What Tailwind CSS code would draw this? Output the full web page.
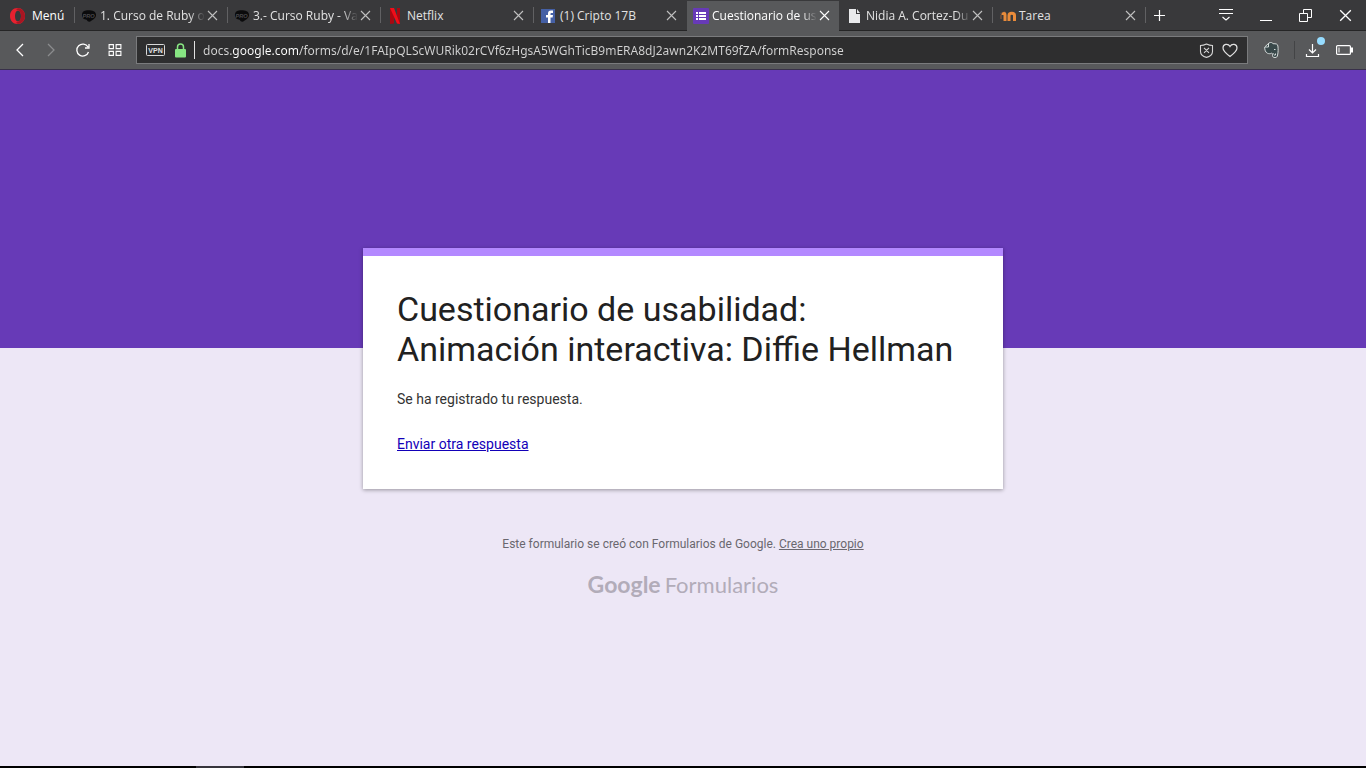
<!DOCTYPE html>
<html lang="es">
<head>
<meta charset="utf-8">
<title>Cuestionario de usabilidad</title>
<script src="https://cdn.jsdelivr.net/npm/@tailwindcss/browser@4"></script>
</head>
<body class="flex min-h-screen flex-col bg-[#ede7f6] font-['Roboto',sans-serif]">
<svg class="hidden" aria-hidden="true">
  <symbol id="x" viewBox="0 0 11 11"><path d="M1 1l9 9M10 1l-9 9" fill="none" stroke="currentColor" stroke-width="1.1"/></symbol>
  <symbol id="pro" viewBox="0 0 17 16"><path d="M1 7C1 3 4 2 8 2s8 1 8 5c0 3-3 5-5 6-2 2-4 1-5-1-3 0-5-2-5-5z" fill="#0b0b0c"/><text x="8" y="10" font-size="6" font-weight="bold" font-style="italic" text-anchor="middle" fill="#4a4a4c" font-family="Liberation Sans, sans-serif">PRO</text></symbol>
</svg>

<header class="font-['Open_Sans',sans-serif] text-xs text-[#e2e2e2]">
  <div class="flex h-[31px] items-center border-b border-[#252526] bg-[#39393b]">
    <button class="flex h-full w-[74px] shrink-0 items-center gap-[7px] pt-[2px] pl-[10px] text-white">
      <svg class="h-4 w-[15px]" viewBox="0 0 15 16"><path fill="#e8212f" fill-rule="evenodd" d="M7.500 0C3 0 0 3.500 0 8s3 8 7.500 8S15 12.500 15 8 12 0 7.500 0zm.5 2.500c2 0 3 2.500 3 5.500s-1 5.500-3 5.500S5 11 5 8s1-5.500 3-5.500z"/><path fill="#a81622" d="M9 .3c3.600.7 6 3.900 6 7.700s-2.400 7-6 7.700c-1.200.2-2.200-.4-3-1.500 1 .2 2 .1 2.800-.6C10.300 12.500 11 10.500 11 8s-.7-4.500-2.200-5.600C8 1.700 7 1.600 6 1.800 6.800.7 7.800.1 9 .3z"/></svg>
      <span>Menú</span>
    </button>
    <div class="flex h-full min-w-0 flex-1 items-center" role="tablist">
      <div class="flex h-full w-[153px] items-center">
        <span class="h-4 w-px shrink-0 bg-[#616163]"></span>
        <button role="tab" class="flex min-w-0 flex-1 items-center gap-[3px] pt-px pl-[6px] text-left"><svg class="h-4 w-4 shrink-0"><use href="#pro"/></svg><span class="w-[105px] overflow-hidden whitespace-nowrap mask-r-from-85% mask-r-to-100%">1. Curso de Ruby o</span></button>
        <button aria-label="Cerrar" class="mr-[9px] text-[#c0c0c0]"><svg class="size-[11px]"><use href="#x"/></svg></button>
      </div>
      <div class="flex h-full w-[153px] items-center">
        <span class="h-4 w-px shrink-0 bg-[#616163]"></span>
        <button role="tab" class="flex min-w-0 flex-1 items-center gap-[3px] pt-px pl-[6px] text-left"><svg class="h-4 w-4 shrink-0"><use href="#pro"/></svg><span class="w-[105px] overflow-hidden whitespace-nowrap mask-r-from-85% mask-r-to-100%">3.- Curso Ruby - Va</span></button>
        <button aria-label="Cerrar" class="mr-[9px] text-[#c0c0c0]"><svg class="size-[11px]"><use href="#x"/></svg></button>
      </div>
      <div class="flex h-full w-[153px] items-center">
        <span class="h-4 w-px shrink-0 bg-[#616163]"></span>
        <button role="tab" class="flex min-w-0 flex-1 items-center gap-1 pt-px pl-[6px] text-left"><svg class="h-4 w-4 shrink-0" viewBox="0 0 16 16"><path d="M3 0h4v15.500L3 16zM10 0h3v16l-3-.5z" fill="#a80811"/><path d="M3 0h4l6 16-3-.5z" fill="#f20d19"/></svg><span class="whitespace-nowrap">Netflix</span></button>
        <button aria-label="Cerrar" class="mr-[9px] text-[#c0c0c0]"><svg class="size-[11px]"><use href="#x"/></svg></button>
      </div>
      <div class="flex h-full w-[153px] items-center">
        <span class="h-4 w-px shrink-0 bg-[#616163]"></span>
        <button role="tab" class="flex min-w-0 flex-1 items-center gap-1 pt-px pl-[6px] text-left"><svg class="h-4 w-4 shrink-0" viewBox="0 0 16 16"><path d="M1 1h14v14H1z" fill="#4560a5"/><path d="M8 15V9.500H6V7h2V5.500C8 3.500 9 2.500 11 2.500h2V5h-1.500c-.8 0-1 .3-1 1v1H13l-.4 2.500h-2.100V15z" fill="#fff"/></svg><span class="whitespace-nowrap">(1) Cripto 17B</span></button>
        <button aria-label="Cerrar" class="mr-[9px] text-[#c0c0c0]"><svg class="size-[11px]"><use href="#x"/></svg></button>
      </div>
      <div class="flex h-full w-[153px] items-center pt-px pl-px">
       <div class="flex h-[30px] w-full items-center bg-[#58595b] text-white">
        <button role="tab" aria-selected="true" class="flex min-w-0 flex-1 items-center gap-[3px] pl-[6px] text-left"><svg class="h-4 w-4 shrink-0" viewBox="0 0 16 16"><rect width="16" height="16" rx="1" fill="#673ab7"/><path d="M3 4h2v2H3zM6 4h7v2H6zM3 7h2v2H3zM6 7h7v2H6zM3 10h2v2H3zM6 10h7v2H6z" fill="#fff"/></svg><span class="w-[105px] overflow-hidden whitespace-nowrap mask-r-from-85% mask-r-to-100%">Cuestionario de us</span></button>
        <button aria-label="Cerrar" class="mr-[9px]"><svg class="size-[11px]"><use href="#x"/></svg></button>
       </div>
      </div>
      <div class="flex h-full w-[153px] items-center">
        <button role="tab" class="flex min-w-0 flex-1 items-center gap-[3px] pt-px pl-2 text-left"><svg class="h-4 w-4 shrink-0" viewBox="0 0 16 16"><path d="M2 1h7v5h4v9H2z M10 1l3 4h-3z" fill="#e9eaec"/></svg><span class="w-[105px] overflow-hidden whitespace-nowrap mask-r-from-85% mask-r-to-100%">Nidia A. Cortez-Du</span></button>
        <button aria-label="Cerrar" class="mr-[9px] text-[#c0c0c0]"><svg class="size-[11px]"><use href="#x"/></svg></button>
      </div>
      <div class="flex h-full w-[153px] items-center">
        <span class="h-4 w-px shrink-0 bg-[#616163]"></span>
        <button role="tab" class="flex min-w-0 flex-1 items-center gap-[3px] pt-px pl-[7px] text-left"><svg class="h-4 w-4 shrink-0" viewBox="0 0 16 16"><path d="M0 5l5-2 1 2-5 2z" fill="#5b4a42"/><path d="M1 7v4" stroke="#76513a" stroke-width="1.500"/><path d="M5 13V7c0-2-2-2-2 0M9 13V7.500c0-3 5.500-3 5.500 0V13" fill="none" stroke="#e98b3a" stroke-width="3"/></svg><span class="whitespace-nowrap">Tarea</span></button>
        <button aria-label="Cerrar" class="mr-[9px] text-[#c0c0c0]"><svg class="size-[11px]"><use href="#x"/></svg></button>
      </div>
      <span class="h-4 w-px shrink-0 bg-[#616163]"></span>
      <button aria-label="Pestaña nueva" class="ml-2 text-white"><svg class="size-[11px]" viewBox="0 0 11 11"><path d="M5.500 0v11M0 5.500h11" stroke="currentColor" stroke-width="1.200"/></svg></button>
    </div>
    <div class="flex shrink-0 items-center gap-[27px] pr-[14px] text-white">
      <button aria-label="Menú de pestañas"><svg class="h-[14px] w-[14px]" viewBox="0 0 14 14"><path d="M0 1.500h14M0 5.500h14M3.500 9L7 12l3.500-3" fill="none" stroke="currentColor" stroke-width="1.100"/></svg></button>
      <button aria-label="Minimizar"><svg class="h-3 w-3" viewBox="0 0 12 12"><path d="M0 11.500h12" stroke="currentColor"/></svg></button>
      <button aria-label="Restaurar"><svg class="h-[13px] w-[13px]" viewBox="0 0 13 13"><path d="M.5 4.500h8v8h-8zM4.500 4.500v-4h8v8h-4" fill="none" stroke="currentColor"/></svg></button>
      <button aria-label="Cerrar ventana"><svg class="h-[13px] w-[13px]" viewBox="0 0 11 11"><use href="#x"/></svg></button>
    </div>
  </div>

  <div class="flex h-[39px] items-center border-b border-[#38304a] bg-[#58595b] text-white">
    <div class="flex w-[136px] shrink-0 items-center gap-[17px] pl-[13px]">
      <button aria-label="Atrás"><svg class="h-4 w-[14px]" viewBox="0 0 14 16"><path d="M10 2L4 8l6 6" fill="none" stroke="currentColor" stroke-width="1.300"/></svg></button>
      <button aria-label="Adelante" class="text-[#8b8c8e]"><svg class="h-4 w-[14px]" viewBox="0 0 14 16"><path d="M4 2l6 6-6 6" fill="none" stroke="currentColor" stroke-width="1.300"/></svg></button>
      <button aria-label="Recargar"><svg class="h-4 w-4" viewBox="0 0 16 16"><path d="M13 5A6 6 0 1 0 13.500 10M14 2v4H10" fill="none" stroke="currentColor" stroke-width="1.300"/></svg></button>
      <button aria-label="Inicio rápido"><svg class="h-3 w-[14px]" viewBox="0 0 14 12"><path d="M1.100.6h4.300v4H1.100zM8.100.6h4.800v4H8.100zM1.100 7.400h4.300v4H1.100zM8.100 7.400h4.800v4H8.100z" fill="none" stroke="currentColor" stroke-width="1.100"/></svg></button>
    </div>
    <div class="flex h-7 min-w-0 flex-1 items-center border border-[#7a7b7d] bg-[#2e2e2f] pr-[9px] pl-[9px]">
      <button aria-label="VPN"><svg class="h-3 w-[19px]" viewBox="0 0 19 12"><rect x=".5" y=".5" width="18" height="11" rx="1" fill="none" stroke="#d8d8d8"/><text x="9.500" y="9" text-anchor="middle" font-size="7" font-weight="bold" fill="#e2e2e2" font-family="Liberation Sans, sans-serif">VPN</text></svg></button>
      <button aria-label="Sitio seguro" class="ml-[10px]"><svg class="h-[15px] w-[11px]" viewBox="0 0 11 15"><rect y="6" width="11" height="8.500" rx="1" fill="#87e582"/><path d="M2.500 7V4a3 3 0 0 1 6 0v3" fill="none" stroke="#87e582" stroke-width="1.500"/></svg></button>
      <span class="mx-2 h-[18px] w-px shrink-0 bg-[#e0e0e0]"></span>
      <input aria-label="Dirección" class="min-w-0 flex-1 bg-linear-[90deg,#d4d4d4_29px,#fff_29px,#fff_97px,#d4d4d4_97px] bg-clip-text pt-px font-['Noto_Sans',sans-serif] text-xs text-transparent outline-none" value="docs.google.com/forms/d/e/1FAIpQLScWURik02rCVf6zHgsA5WGhTicB9mERA8dJ2awn2K2MT69fZA/formResponse">
      <div class="flex shrink-0 items-center gap-2">
        <button aria-label="Bloqueador"><svg class="h-[15px] w-[15px]" viewBox="0 0 15 15"><path d="M1.500 2.500c2 0 4-.5 6-1.500 2 1 4 1.500 6 1.500v6c0 3-2.500 5-6 5.900-3.500-.9-6-2.900-6-5.900zM5 4.900l5 5M10 4.900l-5 5" fill="none" stroke="#d5d5d5" stroke-width="1.100"/></svg></button>
        <button aria-label="Favorito"><svg class="h-[15px] w-[16px]" viewBox="0 0 16 15"><path d="M8 13.500C4 10.500 1 8 1 5c0-4 5-5 7-1.500C10 0 15 1 15 5c0 3-3 5.500-7 8.500z" fill="none" stroke="#e0e0e0" stroke-width="1.200"/></svg></button>
      </div>
    </div>
    <div class="flex w-[118px] shrink-0 items-center pl-4">
      <button aria-label="Evernote"><svg class="h-4 w-[15px]" viewBox="0 0 15 16"><path d="M5 1c2-1 3-.5 4 .7 3 .1 4.500 0 4.900 2.300.4 3 .3 6-.3 9-.3 2-1 2.500-2.600 2.500-2 0-2.500-.7-2.500-2.200 0-.8.300-1.300 1-1.500-1 .2-1.500.2-2-.8-1 1-2.500.8-4 .3C1.500 10.500.5 7.500.7 5z" fill="#39484a" stroke="#d4dad9"/><path d="M1 5h3.500V1" fill="none" stroke="#d4dad9"/><path d="M10 7.500h1.500M10 13h1.500v-1.500" fill="none" stroke="#d4dad9"/></svg></button>
      <span class="ml-[15px] h-[18px] w-px bg-[#434446]"></span>
      <button aria-label="Descargas, una nueva" class="relative ml-[10px]"><svg class="h-[15px] w-[15px]" viewBox="0 0 15 15"><path d="M7.500 1v9M4 6.500l3.500 3.500 3.500-3.500M1.500 11v2.500h12V11" fill="none" stroke="currentColor" stroke-width="1.200"/></svg><span class="absolute -top-[6px] -right-[5px] size-2 rounded-full bg-[#96dcff]"></span></button>
      <button aria-label="Batería" class="ml-4"><svg class="h-[10px] w-[17px]" viewBox="0 0 17 10"><rect x=".6" y=".6" width="13.800" height="8.800" rx="1" fill="none" stroke="currentColor" stroke-width="1.200"/><path d="M2.500 2.500h1v5h-1zM15 2.500h2v5h-2z" fill="currentColor"/></svg></button>
    </div>
  </div>
</header>

<main class="flex-1">
  <div class="h-[278px] bg-[#673ab7]"></div>
  <section class="mx-auto -mt-[100px] w-full max-w-[640px] border-t-8 border-[#b388ff] bg-white px-[34px] pt-[33px] pb-[35px] shadow-[0_1px_4px_rgba(0,0,0,0.37)]">
    <h1 class="text-[34px] leading-10 text-[#212121]">Cuestionario de usabilidad:<br>Animación interactiva: Diffie Hellman</h1>
    <p class="mt-5 text-sm text-[#333333]">Se ha registrado tu respuesta.</p>
    <p class="mt-[25px] text-sm"><a href="#" class="text-[#1200b8] underline">Enviar otra respuesta</a></p>
  </section>
  <footer class="text-center text-[#6a676f]">
    <p class="mt-[47px] text-xs">Este formulario se creó con Formularios de Google. <a href="#" class="underline">Crea uno propio</a></p>
    <a href="#" class="mt-4 flex items-baseline justify-center gap-1 font-['Lato',sans-serif] text-[22px] leading-8 text-[#b2acb9]"><span class="text-[23px] font-bold">Google</span><span>Formularios</span></a>
  </footer>
</main>
<div class="h-[2px] bg-black pl-[196px]"><div class="h-full w-12 bg-[#36353c]"></div></div>
</body>
</html>
